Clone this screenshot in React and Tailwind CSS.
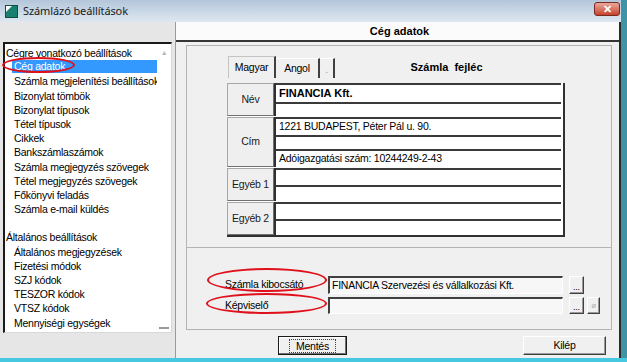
import React from 'react';

const leftItems = [
  { label: 'Cégre vonatkozó beállítások', group: true },
  { label: 'Cég adatok', selected: true },
  { label: 'Számla megjelenítési beállítások' },
  { label: 'Bizonylat tömbök' },
  { label: 'Bizonylat típusok' },
  { label: 'Tétel típusok' },
  { label: 'Cikkek' },
  { label: 'Bankszámlaszámok' },
  { label: 'Számla megjegyzés szövegek' },
  { label: 'Tétel megjegyzés szövegek' },
  { label: 'Főkönyvi feladás' },
  { label: 'Számla e-mail küldés' },
  { label: '' },
  { label: 'Általános beállítások', group: true },
  { label: 'Általános megjegyzések' },
  { label: 'Fizetési módok' },
  { label: 'SZJ kódok' },
  { label: 'TESZOR kódok' },
  { label: 'VTSZ kódok' },
  { label: 'Mennyiségi egységek' },
];

const rows = [
  { label: 'Név', h: 'h-[33px]', lines: [{ text: 'FINANCIA Kft.', bold: true }, {}] },
  {
    label: 'Cím',
    h: 'h-[50px]',
    lines: [{ text: '1221 BUDAPEST, Péter Pál u. 90.' }, {}, { text: 'Adóigazgatási szám: 10244249-2-43' }],
  },
  { label: 'Egyéb 1', h: 'h-[33px]', lines: [{}, {}] },
  { label: 'Egyéb 2', h: 'h-[33px]', lines: [{}, {}] },
];

// classic raised 3d button look
const raised =
  'bg-[#f0f0f0] border border-t-white border-l-white border-b-[#404040] border-r-[#404040] shadow-[inset_-1px_-1px_0_#9a9a9a]';
const sunken =
  'border-t-2 border-l-2 border-b border-r border-t-[#404040] border-l-[#404040] border-b-white border-r-white';

const TitleBar = () => (
  <div className="flex items-center h-[22px] bg-linear-to-b from-[#b3c6da] to-[#dfe8f1]">
    <svg className="ml-[5px]" width="13" height="13" viewBox="0 0 13 13">
      <rect x="0" y="0" width="13" height="13" fill="#17806e" />
      <rect x="0.5" y="0.5" width="12" height="12" fill="none" stroke="#0d4f45" />
      <polygon points="1,1 7,1 1,7" fill="#ffffff" />
    </svg>
    <span className="ml-[5px] font-['Noto_Sans',sans-serif] text-[11px] tracking-[-0.1px] text-[#1a1a1a]">
      Számlázó beállítások
    </span>
    <div className="ml-auto mr-[1px] mt-[-4px] w-[26px] h-[14px] rounded-[3px] border border-[#7a2a20] bg-linear-to-b from-[#e9a89a] to-[#c4402c] flex items-center justify-center text-white text-[11px] font-bold leading-none">
      ✕
    </div>
  </div>
);

const LeftPane = () => (
  <div className="w-[175px] flex flex-col bg-[#e6e6e6]">
    <div className="h-[20px]" />
    <div className="ml-[3px] w-[169px] h-[291px] bg-white border-t-2 border-l-2 border-[#1a1a1a] border-r border-b border-r-[#d8d8d8] border-b-[#d8d8d8] flex">
      <div className="w-[152px] pt-[2px] overflow-hidden">
        {leftItems.map((it, i) => (
          <div key={i} className="h-[14.2px] leading-[14.2px] whitespace-nowrap">
            {it.group ? (
              <span className="pl-[1px]">{it.label}</span>
            ) : it.selected ? (
              <div className="ml-[7px] pl-[2px] h-[13px] leading-[13px] bg-[#3399ff] text-white">{it.label}</div>
            ) : (
              <span className="pl-[9px]">{it.label}</span>
            )}
          </div>
        ))}
      </div>
      <div className="flex-1 flex flex-col items-center justify-between py-[2px]">
        <span className="text-[7px] text-[#b8b8b8] leading-none mt-[3px]">▲</span>
        <div className="w-[10px] h-[2px] bg-[#9a9a9a] mb-[1px]" />
      </div>
    </div>
  </div>
);

const Tabs = () => (
  <div className="flex items-end h-[22px] ml-[41px] w-[338px]">
    <div className="h-[22px] w-[48px] border-t border-l border-[#c4c4c4] border-r-2 border-r-[#404040] flex items-center justify-center">
      Magyar
    </div>
    <div className="h-[20px] w-[44px] border-t border-white border-r-2 border-r-[#404040] flex items-center justify-center">
      Angol
    </div>
    <div className="h-[20px] w-[15px] border-t border-white border-r-2 border-r-[#404040] flex items-end justify-center text-[#9a9a9a]">
      .
    </div>
    <div className="flex-1 h-full flex items-center justify-center pr-[8px] font-bold text-[11px] tracking-normal">
      Számla&nbsp;&nbsp;fejléc
    </div>
  </div>
);

const Table = () => (
  <div className="mt-[5px] ml-[40px] w-[338px] flex flex-col gap-[1px] bg-white border-r-2 border-b-2 border-[#303030]">
    {rows.map((r) => (
      <div key={r.label} className={`flex ${r.h}`}>
        <div className="w-[47px] flex items-center justify-center bg-[#efefef] border border-[#a8a8a8] border-r-[#707070] border-b-[#707070] text-[#1a1a1a]">
          {r.label}
        </div>
        <div className="flex-1 flex flex-col border-l-2 border-[#303030] mr-[2px]">
          {r.lines.map((l, i) => (
            <div
              key={i}
              className={`flex-1 flex items-center px-[3px] border-t-2 border-[#3a3a3a] whitespace-nowrap ${l.bold ? 'font-bold text-[11px] tracking-normal' : ''}`}
            >
              {l.text}
            </div>
          ))}
        </div>
      </div>
    ))}
  </div>
);

const PickRow = ({ label, value, extra, className }) => (
  <div className={`flex items-center ${className}`}>
    <div className="ml-[38px] w-[103px] whitespace-nowrap">{label}</div>
    <div className={`w-[235px] h-full flex items-center px-[2px] bg-[#f7f7f7] whitespace-nowrap ${sunken}`}>{value}</div>
    <div className={`ml-[6px] w-[15px] h-full flex items-end justify-center text-[9px] leading-[12px] ${raised}`}>...</div>
    {extra && (
      <div className={`ml-[3px] w-[13px] h-full flex items-center justify-center text-[8px] text-[#b0b0b0] ${raised}`}>ø</div>
    )}
  </div>
);

const RightPane = () => (
  <div className="flex-1 flex flex-col border-l border-[#9a9a9a] border-r-2 border-r-[#2a2a2a]">
    <div className="h-[20px] bg-[#fbfbfb] border-b-2 border-[#353535] flex items-center justify-center font-bold text-[11px] tracking-normal pl-[4px]">
      Cég adatok
    </div>
    <div className="flex-1 bg-[#f0f0f0] flex flex-col">
      <div className="ml-[10px] mt-[3px] w-[426px] h-[285px] border border-[#b4b4b4] flex flex-col">
        <div className="h-[201px] pt-[10px]">
          <Tabs />
          <Table />
        </div>
        <div className="flex-1 border-t border-[#b4b4b4] pt-[28px]">
          <PickRow className="h-[18px]" label="Számla kibocsátó" value="FINANCIA Szervezési és vállalkozási Kft." />
          <PickRow className="h-[17px] mt-[3px]" label="Képviselő" value="" extra />
        </div>
      </div>
      <div className="flex mt-[6px] h-[19px]">
        <div className="ml-[102px] w-[69px] flex items-center justify-center border border-[#1a1a1a] bg-[#f0f0f0] shadow-[inset_-1px_-1px_0_#707070,inset_1px_1px_0_#ffffff]">
          <span className="px-[6px] leading-[12px] border border-dotted border-[#404040]">Mentés</span>
        </div>
        <div className={`ml-[176px] w-[83px] flex items-center justify-center ${raised}`}>Kilép</div>
      </div>
    </div>
  </div>
);

export default function App() {
  return (
    <div className="relative w-[627px] h-[362px] overflow-hidden flex flex-col bg-[#3f93a6] font-['Liberation_Sans',Arial,sans-serif] text-[10.5px] tracking-[-0.25px] text-black">
      <div className="w-[621px] h-[358px] flex flex-col bg-[#e6e6e6]">
        <TitleBar />
        <div className="flex flex-1 min-h-0">
          <LeftPane />
          <RightPane />
        </div>
      </div>
      <div className="flex-1 bg-[#45c8e0]" />

      {/* red annotation ellipses */}
      <div className="absolute left-[2px] top-[57px] w-[73px] h-[16px] rounded-[50%] border-2 border-[#e0101a]" />
      <div className="absolute left-[207px] top-[268px] w-[120px] h-[24px] rounded-[50%] border-2 border-[#e0101a]" />
      <div className="absolute left-[206px] top-[293px] w-[121px] h-[21px] rounded-[50%] border-2 border-[#e0101a]" />
    </div>
  );
}
